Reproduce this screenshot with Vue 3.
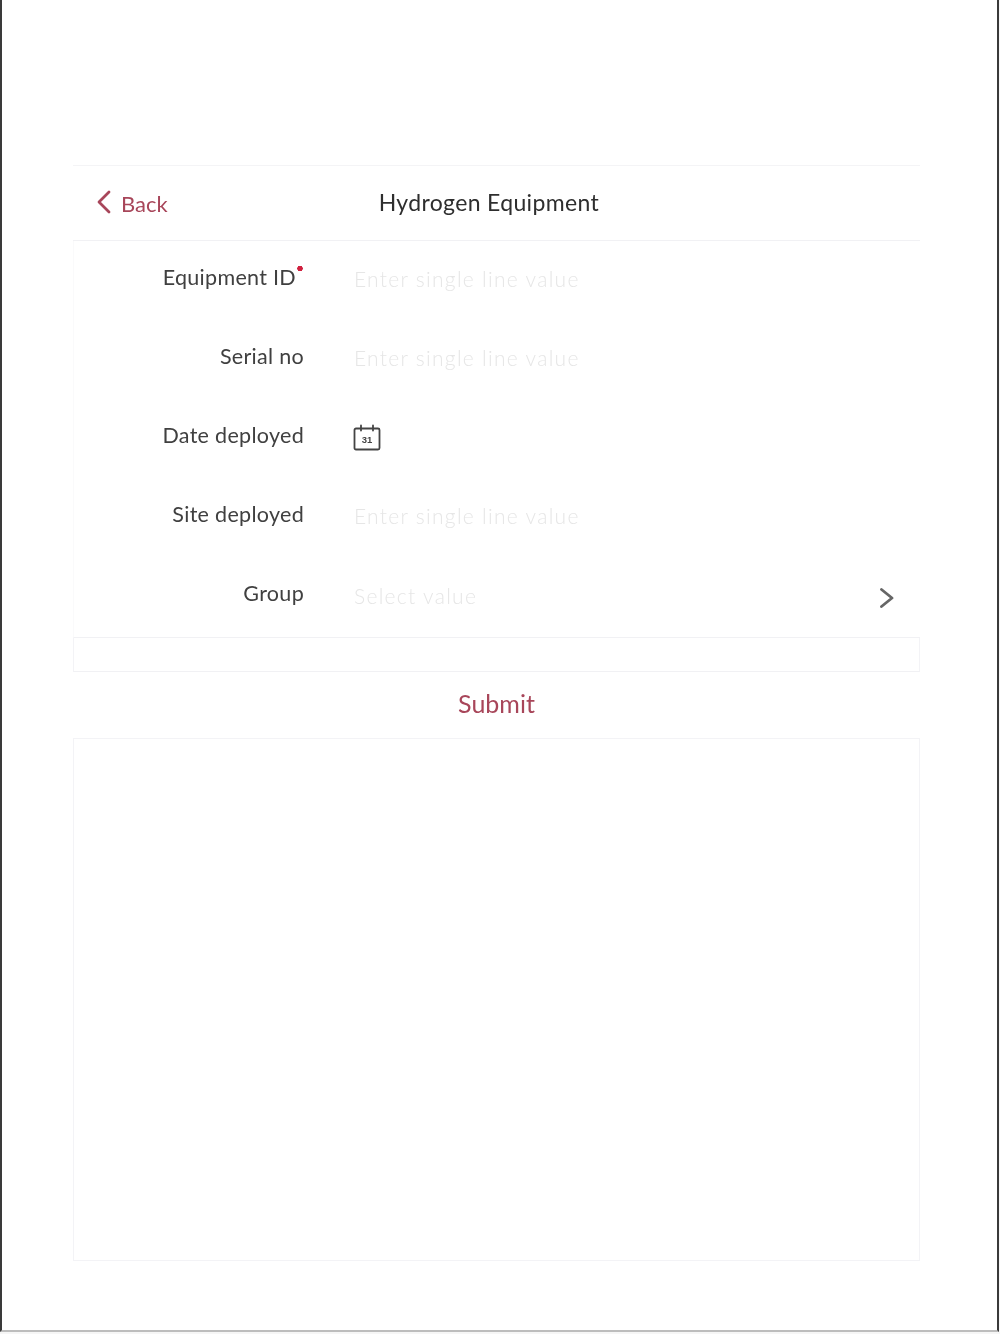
<script setup>
const rows = [
  { label: 'Equipment ID', required: true, type: 'text', hint: 'Enter single line value' },
  { label: 'Serial no', type: 'text', hint: 'Enter single line value' },
  { label: 'Date deployed', type: 'date' },
  { label: 'Site deployed', type: 'text', hint: 'Enter single line value' },
  { label: 'Group', type: 'select', hint: 'Select value' },
]
</script>

<template>
  <div class="frame">
    <div class="card">
      <header class="head">
        <div class="back">
          <svg class="back-icon" width="16" height="24" viewBox="0 0 16 24" fill="none">
            <path d="M13 2 L3 12 L13 22" stroke="#a8465a" stroke-width="2.800" stroke-linecap="round" stroke-linejoin="round" />
          </svg>
          <span>Back</span>
        </div>
        <h1 class="title">Hydrogen Equipment</h1>
      </header>

      <form class="form">
        <div v-for="row in rows" :key="row.label" class="row" :class="'row-' + row.type">
          <div class="label">
            {{ row.label }}<span v-if="row.required" class="req"></span>
          </div>
          <div class="value">
            <span v-if="row.hint" class="hint">{{ row.hint }}</span>
            <svg v-if="row.type === 'date'" class="cal" width="28" height="27" viewBox="0 0 28 27" fill="none">
              <rect x="1.500" y="4.500" width="25" height="21" rx="1.500" stroke="#444" stroke-width="1.800" />
              <path d="M8 1.500v5M20 1.500v5" stroke="#444" stroke-width="1.800" stroke-linecap="round" />
              <text x="14" y="19" text-anchor="middle" class="cal-text">31</text>
            </svg>
            <svg v-if="row.type === 'select'" class="chev" width="16" height="22" viewBox="0 0 16 22" fill="none">
              <path d="M2.500 2.500 L13 11 L2.500 19.500" stroke="#666" stroke-width="2.800" stroke-linejoin="round" stroke-linecap="round" />
            </svg>
          </div>
        </div>
      </form>

      <div class="band"></div>
      <div class="submit">Submit</div>
      <div class="panel"></div>
    </div>
  </div>
</template>

<style>
html, body { margin: 0; background: #f6f6f6; }
</style>

<style scoped>
.frame {
  box-sizing: border-box;
  width: 999px;
  height: 1332px;
  padding: 165px 0 0 71px;
  background: #fff;
  border-left: 2px solid #3a3a3a;
  border-right: 2px solid #3a3a3a;
  border-bottom: 2px solid #bdbdbd;
  font-family: Lato, "Open Sans", sans-serif;
}
.card {
  width: 847px;
  display: flex;
  flex-direction: column;
}
.head {
  box-sizing: border-box;
  height: 76px;
  display: flex;
  align-items: center;
  border-top: 1px solid #f4f4f6;
  border-bottom: 1px solid #f1f1f4;
}
.back {
  display: flex;
  align-items: center;
  gap: 9px;
  margin-left: 23px;
  color: #a8465a;
  font-size: 22px;
  filter: blur(0.7px);
}
.back-icon { margin-top: -2px; }
.title {
  margin: -2px 0 0 211px;
  font-size: 23px;
  font-weight: 400;
  letter-spacing: 0.35px;
  color: #2e2e2e;
  filter: blur(0.7px);
}
.form {
  box-sizing: border-box;
  height: 397px;
  display: flex;
  flex-direction: column;
  border-left: 1px solid #fafafb;
  border-bottom: 1px solid #f1f1f4;
}
.row {
  height: 79px;
  display: flex;
  align-items: center;
}
.label {
  box-sizing: border-box;
  width: 230px;
  text-align: right;
  font-size: 21.500px;
  letter-spacing: 0.3px;
  color: #404040;
  margin-top: -8px;
  filter: blur(0.7px);
}
.req {
  display: inline-block;
  width: 8px;
  height: 5px;
  vertical-align: 14px;
  background: radial-gradient(circle at 4px 2.500px, #d0213f 2.500px, transparent 3px);
}
.value {
  flex: 1;
  margin-left: 50px;
  display: flex;
  align-items: center;
  justify-content: space-between;
  padding-right: 25px;
  height: 30px;
}
.hint {
  margin-top: -4px;
  font-size: 21px;
  font-weight: 300;
  letter-spacing: 1.300px;
  color: #e6e6e6;
  filter: blur(0.7px);
}
.row-select .hint { margin-top: -2px; }
.cal { margin-top: -2px; margin-left: -1px; filter: blur(0.6px); }
.cal-text {
  font-family: "Liberation Sans", sans-serif;
  font-size: 9.500px;
  font-weight: 700;
  fill: #444;
}
.chev { margin-top: 2px; filter: blur(0.5px); }
.band {
  box-sizing: border-box;
  height: 34px;
  border-left: 1px solid #f3f3f6;
  border-right: 1px solid #f3f3f6;
  border-bottom: 1px solid #f1f1f4;
}
.submit {
  box-sizing: border-box;
  height: 66px;
  padding-bottom: 5px;
  display: flex;
  align-items: center;
  justify-content: center;
  font-size: 25px;
  color: #a8465a;
  filter: blur(0.7px);
}
.panel {
  box-sizing: border-box;
  height: 523px;
  border: 1px solid #f3f3f6;
}
</style>
